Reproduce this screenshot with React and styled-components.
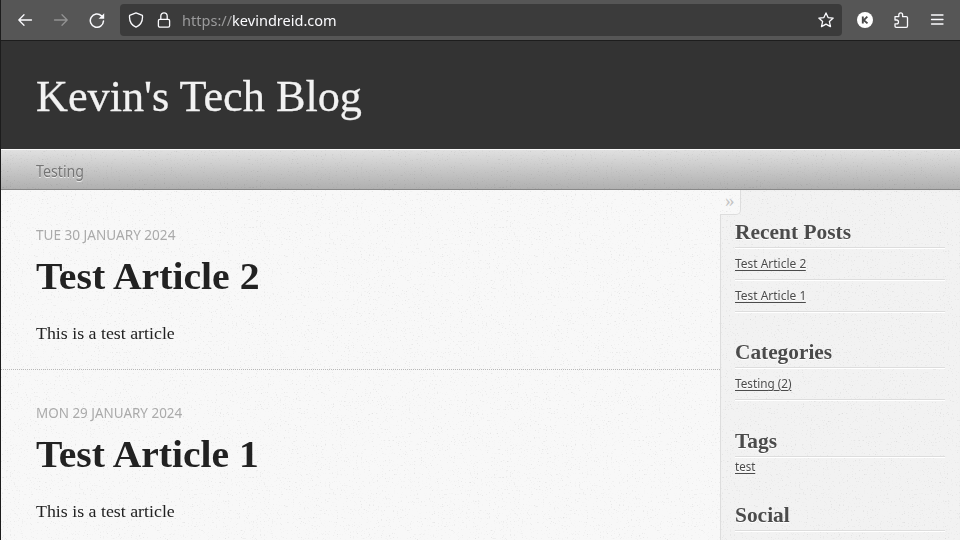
import React from "react";
import styled, { createGlobalStyle } from "styled-components";

const serif = '"Liberation Serif", serif';
const sans = '"Noto Sans", sans-serif';

const grain = `url("data:image/svg+xml,${encodeURIComponent(
  `<svg xmlns='http://www.w3.org/2000/svg' width='250' height='250'><filter id='n' x='0' y='0' width='100%' height='100%'><feTurbulence type='fractalNoise' baseFrequency='0.75' numOctaves='2' seed='8' stitchTiles='stitch'/><feColorMatrix values='0 0 0 0 0 0 0 0 0 0 0 0 0 0 0 0.35 0 0 0 -0.22'/></filter><rect width='250' height='250' filter='url(#n)'/></svg>`
)}")`;

const Global = createGlobalStyle`
  * { box-sizing: border-box; }
  body { margin: 0; overflow: hidden; background: #f8f8f8; }
  h1, h2, h3, p, ul { margin: 0; padding: 0; }
`;

const Window = styled.div`
  width: 960px;
  height: 540px;
  overflow: hidden;
  border-left: 1px solid #1c1c1c;
  display: flex;
  flex-direction: column;
`;

/* Condenses or widens a run of text from its left edge. */
const Fit = styled.span`
  display: inline-block;
  white-space: nowrap;
  transform: scaleX(${(p) => p.$x});
  transform-origin: left center;
`;

const Toolbar = styled.header`
  height: 41px;
  flex: none;
  display: flex;
  align-items: center;
  background: #565656;
  border-bottom: 1px solid #1d1d1d;
  color: #fbfbfe;
`;

const ToolButton = styled.button`
  width: 36px;
  height: 36px;
  padding: 0;
  border: 0;
  background: none;
  color: ${(p) => (p.$dim ? "#939393" : "#fbfbfe")};
  display: grid;
  place-items: center;
`;

const ButtonGroup = styled.div`
  display: flex;
  padding: ${(p) => p.$pad};
`;

const UrlBar = styled.div`
  flex: 1;
  height: 32px;
  border-radius: 4px;
  background: #3b3b3b;
  display: flex;
  align-items: center;
  padding: 0 7px;
`;

const UrlIcon = styled.span`
  width: 18px;
  height: 18px;
  display: grid;
  place-items: center;
  margin-right: ${(p) => p.$gap || 0}px;
`;

const Address = styled.div`
  flex: 1;
  font: 15px/20px ${sans};
  color: #fbfbfe;
`;

const Scheme = styled.span`
  color: #9b9b9c;
`;

const Masthead = styled.div`
  height: 108px;
  flex: none;
  padding: 29px 0 0 35px;
  background: #333;
`;

const SiteTitle = styled.h1`
  font: 400 45px/52px ${serif};
  color: #f2f2f2;
  -webkit-text-stroke: 0.3px #f2f2f2;
`;

const Nav = styled.nav`
  height: 41px;
  flex: none;
  padding: 10px 0 0 35px;
  background: ${grain}, linear-gradient(#e0e0e0, #b0b0b0);
  border-top: 1px solid #fafafa;
  border-bottom: 1px solid #888;
  font: 15.5px/22px ${sans};
  color: #757575;
  text-shadow: 0 1px #eee;
`;

const Body = styled.div`
  flex: 1;
  min-height: 0;
  display: flex;
  background: ${grain}, #f8f8f8;
`;

const Posts = styled.main`
  width: 719px;
  flex: none;
`;

const Post = styled.article`
  height: ${(p) => p.$h}px;
  padding: ${(p) => p.$top}px 0 0 35px;
  border-bottom: 1px dotted #b8b8b8;
`;

const PostDate = styled.p`
  font: 14px/20px ${sans};
  color: #aaa;
`;

const PostTitle = styled.h2`
  margin-top: 10px;
  font: 700 37.5px/44px ${serif};
  color: #222;
`;

const PostText = styled.p`
  margin-top: 22px;
  font: 17.5px/24px ${serif};
  color: #222;
`;

const Sidebar = styled.aside`
  position: relative;
  flex: 1;
  padding: 29px 15px 0 14px;
  background: ${grain}, #f2f2f2;
  border-left: 1px solid #ddd;
  box-shadow: inset 0 1px 3px rgba(0, 0, 0, 0.02);
`;

const Collapse = styled.a`
  position: absolute;
  left: -1px;
  top: 0;
  width: 21px;
  height: 25px;
  background: ${grain}, #f8f8f8;
  border: solid #ddd;
  border-width: 0 1px 1px 0;
  border-bottom-right-radius: 5px;
  font: 19px/22px ${serif};
  color: #c4c4c4;
  padding-left: 5px;
`;

const Section = styled.section`
  margin-bottom: ${(p) => p.$after}px;
`;

const SectionTitle = styled.h3`
  height: 29px;
  border-bottom: 1px solid #ddd;
  box-shadow: 0 1px #fff;
  font: 700 21px/26px ${serif};
  color: #4b4b4b;
  text-shadow: 0 1px #fff;
`;

const Item = styled.div`
  height: ${(p) => (p.$plain ? 20 : 32)}px;
  padding-top: ${(p) => (p.$plain ? 0 : 6)}px;
  border-bottom: ${(p) => (p.$plain ? 0 : 1)}px solid #ddd;
  box-shadow: ${(p) => (p.$plain ? "none" : "0 1px #fff")};
  font: 12.5px/19px ${sans};
  color: #4b4b4b;
`;

const ItemLink = styled(Fit)`
  line-height: 12px;
  border-bottom: 1px solid #4b4b4b;
  text-shadow: 0 1px #fff;
`;

const Icon = ({ children, size = 16 }) => (
  <svg width={size} height={size} viewBox="0 0 16 16" fill="none" stroke="currentColor" strokeWidth="1.3" strokeLinecap="round" strokeLinejoin="round">
    {children}
  </svg>
);

const posts = [
  { date: "TUE 30 JANUARY 2024", dx: 0.969, title: "Test Article 2", tx: 1.059, h: 180, top: 35 },
  { date: "MON 29 JANUARY 2024", dx: 0.96, title: "Test Article 1", tx: 1.056, h: 200, top: 33 },
];

const sections = [
  { title: "Recent Posts", x: 1.02, after: 27, items: [["Test Article 2", 0.957], ["Test Article 1", 0.957]] },
  { title: "Categories", x: 1.015, after: 28, items: [["Testing (2)", 0.94]] },
  { title: "Tags", x: 1.02, after: 25, plain: true, items: [["test", 0.92]] },
  { title: "Social", x: 1.02, after: 20, items: [] },
];

export default function App() {
  return (
    <Window>
      <Global />
      <Toolbar>
        <ButtonGroup $pad="0 5px 0 6px">
          <ToolButton aria-label="Back"><Icon><path d="M14.5 8H1.8M7 2.8 1.8 8 7 13.2" /></Icon></ToolButton>
          <ToolButton aria-label="Forward" $dim><Icon><path d="M1.5 8h12.7M9 2.8 14.2 8 9 13.2" /></Icon></ToolButton>
          <ToolButton aria-label="Reload">
            <Icon>
              <path d="M12.5 3.9A6.6 6.6 0 1 0 14.5 9" strokeWidth="1.5" />
              <path d="M15.2 1.2v5.6H9.6z" fill="currentColor" stroke="none" />
            </Icon>
          </ToolButton>
        </ButtonGroup>
        <UrlBar>
          <UrlIcon $gap={10}><Icon><path d="M8 .9 14.4 3.3C15 8.8 12.2 13.2 8 15.2 3.8 13.2 1 8.8 1.6 3.3z" /></Icon></UrlIcon>
          <UrlIcon $gap={9}><Icon><rect x="2.4" y="7.3" width="11.2" height="7.8" rx="1.4" /><path d="M4.8 7V4a3.2 3.2 0 0 1 6.4 0v3" /></Icon></UrlIcon>
          <Address><Fit $x={0.969}><Scheme>https://</Scheme>kevindreid.com</Fit></Address>
          <UrlIcon><Icon><path d="m8 .9 2.1 4.7 5.1.5-3.8 3.5 1.1 5L8 12.1l-4.5 2.5 1.1-5L.8 6.1l5.1-.5z" /></Icon></UrlIcon>
        </UrlBar>
        <ButtonGroup $pad="0 5px">
          <ToolButton aria-label="Account">
            <svg width="16" height="16" viewBox="0 0 16 16">
              <circle cx="8" cy="8" r="8" fill="#fff" />
              <path d="M5.8 4.6v6.8M10.3 4.6 6.8 8.2l3.7 3.2" fill="none" stroke="#4a4a4a" strokeWidth="1.9" />
            </svg>
          </ToolButton>
          <ToolButton aria-label="Extensions">
            <Icon><path d="M2 4.6h3.8V2.8a1.9 1.9 0 0 1 3.8 0v1.8h3.7q1.2 0 1.2 1.2v8.3q0 1.2-1.2 1.2H3.2Q2 15.3 2 14.1v-2.3h1.6a1.9 1.9 0 0 0 0-3.8H2z" /></Icon>
          </ToolButton>
          <ToolButton aria-label="Menu"><Icon><path d="M2.5 3h11.5M2.5 7.5h11.5M2.5 12h11.5" /></Icon></ToolButton>
        </ButtonGroup>
      </Toolbar>
      <Masthead><SiteTitle><Fit $x={0.983}>Kevin's Tech Blog</Fit></SiteTitle></Masthead>
      <Nav><Fit $x={0.918}>Testing</Fit></Nav>
      <Body>
        <Posts>
          {posts.map((p) => (
            <Post key={p.title} $h={p.h} $top={p.top}>
              <PostDate><Fit $x={p.dx}>{p.date}</Fit></PostDate>
              <PostTitle><Fit $x={p.tx}>{p.title}</Fit></PostTitle>
              <PostText><Fit $x={1.02}>This is a test article</Fit></PostText>
            </Post>
          ))}
        </Posts>
        <Sidebar>
          <Collapse>»</Collapse>
          {sections.map((s) => (
            <Section key={s.title} $after={s.after}>
              <SectionTitle><Fit $x={s.x}>{s.title}</Fit></SectionTitle>
              {s.items.map(([label, x]) => (
                <Item key={label} $plain={s.plain}><ItemLink as="a" $x={x}>{label}</ItemLink></Item>
              ))}
            </Section>
          ))}
        </Sidebar>
      </Body>
    </Window>
  );
}
